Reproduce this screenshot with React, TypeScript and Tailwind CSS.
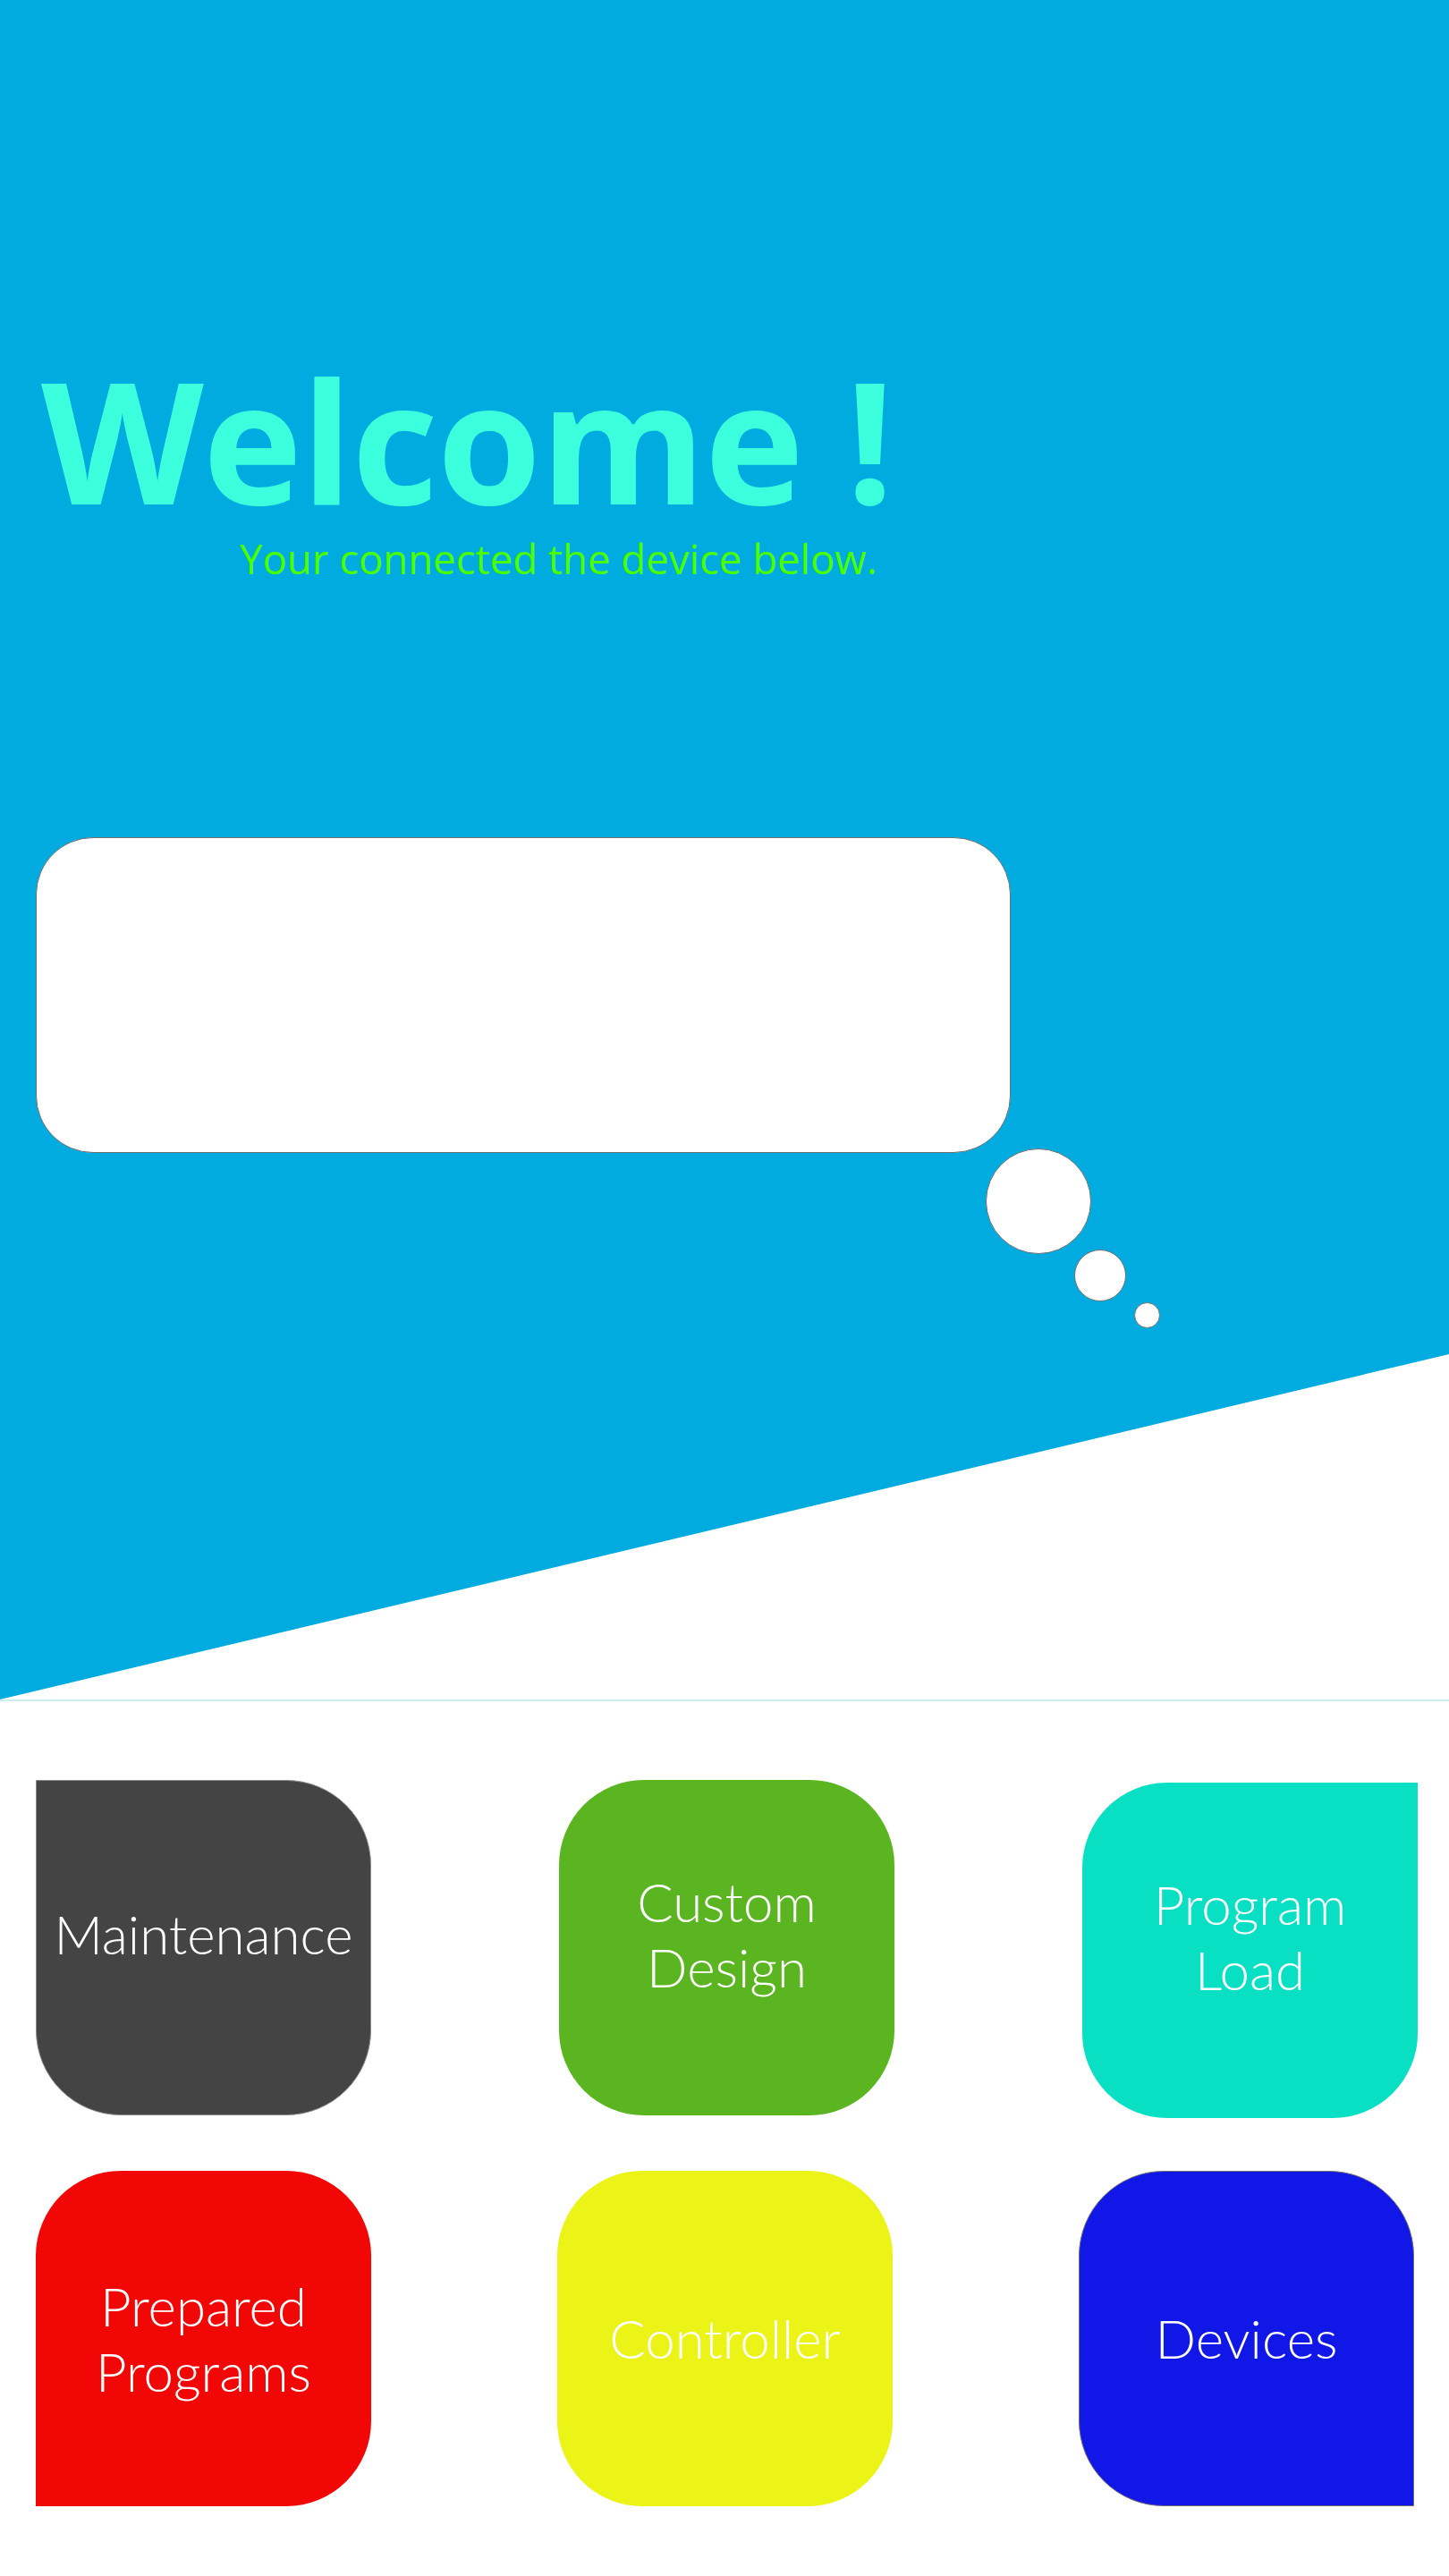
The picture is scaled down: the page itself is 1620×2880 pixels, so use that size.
import React from "react";

type TileProps = {
  lines: string[];
  className: string;
};

function Tile({ lines, className }: TileProps) {
  return (
    <div
      className={
        "flex h-[375px] w-[375px] flex-col items-center justify-center text-center text-[60px] leading-[73px] font-light text-white " +
        className
      }
      style={{ fontFamily: "Lato, 'Open Sans', sans-serif" }}
    >
      {lines.map((l) => (
        <span key={l}>{l}</span>
      ))}
    </div>
  );
}

export default function App() {
  return (
    <div className="min-h-[2880px] w-[1620px] bg-white">
      <section className="relative h-[1900px]">
        <div className="absolute inset-0 bg-[#00abdf] [clip-path:polygon(0_0,100%_0,100%_1514px,0_100%)]" />
        <div className="relative flex flex-col pl-[40px] pt-[416px]">
          <h1
            className="ml-[6px] text-[188px] font-bold leading-[150px] tracking-[-1px] text-[#3bffdd]"
            style={{ fontFamily: "'Open Sans', 'Noto Sans', sans-serif" }}
          >
            Welcome !
          </h1>
          <p
            className="ml-[228px] mt-[36px] text-[45.5px] leading-none text-[#4cff00]"
            style={{ fontFamily: "'Open Sans', 'Noto Sans', sans-serif" }}
          >
            Your connected the device below.
          </p>
          <div className="relative mt-[288px] h-[353px] w-[1090px]">
            <div className="h-full w-full rounded-[64px] border border-[#6f6f6f] bg-white" />
            <div className="absolute left-[1062px] top-[348px] h-[118px] w-[118px] rounded-full border border-[#6f6f6f] bg-white" />
            <div className="absolute left-[1161px] top-[461px] h-[58px] w-[58px] rounded-full border border-[#6f6f6f] bg-white" />
            <div className="absolute left-[1228px] top-[520px] h-[29px] w-[29px] rounded-full border border-[#6f6f6f] bg-white" />
          </div>
        </div>
      </section>
      <div className="h-[2px] w-full bg-[#cdeeee]" />
      <section className="flex flex-col gap-y-[59px] pl-[40px] pr-[35px] pt-[88px]">
        <div className="flex items-start justify-between">
          <Tile
            lines={["Maintenance"]}
            className="rounded-[95px] rounded-tl-none border border-[#8a8a8a] bg-[#434443] pb-[30px]"
          />
          <Tile
            lines={["Custom", "Design"]}
            className="rounded-[95px] bg-[#5ab520] pb-[30px]"
          />
          <Tile
            lines={["Program", "Load"]}
            className="mt-[3px] rounded-[95px] rounded-tr-none bg-[#08dfc3] pb-[30px]"
          />
        </div>
        <div className="flex items-start justify-between">
          <Tile
            lines={["Prepared", "Programs"]}
            className="rounded-[95px] rounded-bl-none bg-[#f20707]"
          />
          <Tile
            lines={["Controller"]}
            className="rounded-[95px] bg-[#ecf316]"
          />
          <Tile
            lines={["Devices"]}
            className="mr-[4px] rounded-[95px] rounded-br-none border border-[#6f6f6f] bg-[#1117e6]"
          />
        </div>
      </section>
    </div>
  );
}
